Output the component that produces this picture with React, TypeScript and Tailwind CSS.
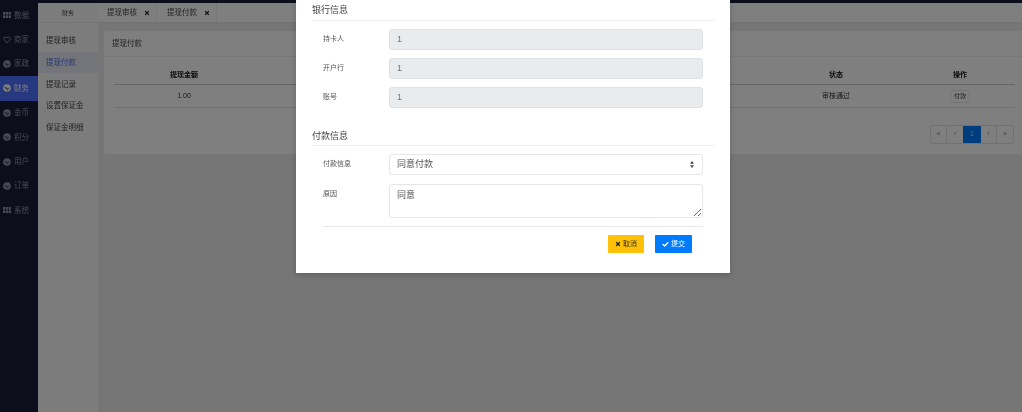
import { Check, X } from "lucide-react";

const NAV = [
  { label: "数据", icon: "grid" },
  { label: "商家", icon: "heart" },
  { label: "家政", icon: "globe" },
  { label: "财务", icon: "globe", active: true },
  { label: "金币", icon: "globe" },
  { label: "积分", icon: "globe" },
  { label: "用户", icon: "globe" },
  { label: "订单", icon: "globe" },
  { label: "系统", icon: "grid" },
];

const SUB_NAV = ["提现审核", "提现付款", "提现记录", "设置保证金", "保证金明细"];

function NavIcon({ type }: { type: string }) {
  if (type === "grid") {
    return (
      <svg width="8" height="6" viewBox="0 0 8 6" fill="currentColor" className="shrink-0">
        <rect x="0" y="0" width="2.3" height="2.6" />
        <rect x="2.85" y="0" width="2.3" height="2.6" />
        <rect x="5.7" y="0" width="2.3" height="2.6" />
        <rect x="0" y="3.4" width="2.3" height="2.6" />
        <rect x="2.85" y="3.4" width="2.3" height="2.6" />
        <rect x="5.7" y="3.4" width="2.3" height="2.6" />
      </svg>
    );
  }
  if (type === "heart") {
    return (
      <svg width="8" height="8" viewBox="0 0 8 8" fill="none" stroke="currentColor" strokeWidth="1" className="shrink-0">
        <path d="M4 6.6 C1.8 5 .8 4 .8 2.7 C.8 1.6 1.6 1 2.4 1 C3.1 1 3.7 1.4 4 2 C4.3 1.4 4.9 1 5.6 1 C6.4 1 7.2 1.6 7.2 2.7 C7.2 4 6.2 5 4 6.6 Z" />
      </svg>
    );
  }
  return (
    <svg width="8" height="8" viewBox="0 0 8 8" className="shrink-0">
      <circle cx="4" cy="4" r="3.8" fill="currentColor" />
      <path d="M1.2 3.4 L3.2 2.6 L4 4.2 L6.8 3.4 L4.4 6.8 L3 5 Z" fill="#1a1c36" opacity="0.55" />
    </svg>
  );
}

function Field({ label, value }: { label: string; value: string }) {
  return (
    <div className="flex h-[21px] items-start">
      <div className="w-[77px] shrink-0 pl-[11px] pt-[3px] text-[7px] leading-[14px] whitespace-nowrap text-[#555]">{label}</div>
      <div className="flex h-[21px] w-[314px] items-center rounded-[3px] border border-[#dee2e6] bg-[#e9ecef] pl-[7px] text-[9px] text-[#6c757d]">
        {value}
      </div>
    </div>
  );
}

export default function App() {
  return (
    <div className="relative flex h-[412px] w-[1022px] flex-col overflow-hidden bg-[#ededed] blur-[0.4px] font-['Liberation_Sans','Noto_Sans_CJK_SC',sans-serif]">
      <div className="h-[3px] shrink-0 bg-[#1a1c36]" />
      <div className="flex min-h-0 flex-1">
        <aside className="w-[38px] shrink-0 bg-[#1a1c36] text-[7.5px] text-[#9296ae]">
          {NAV.map((item) => (
            <div
              key={item.label}
              className={`flex h-[24.4px] items-center gap-[3px] pl-[3px] whitespace-nowrap ${
                item.active ? "bg-[#4c70ff] text-white" : ""
              }`}
            >
              <NavIcon type={item.icon} />
              <span>{item.label}</span>
            </div>
          ))}
        </aside>
        <div className="w-[60px] shrink-0 bg-[#f9f9fb] text-[7.5px] text-[#444]">
          <div className="flex h-[20px] items-center justify-center border-b border-[#e9e9e9] pt-[1px] text-[6px]">财务</div>
          <div className="pt-[7px]">
            {SUB_NAV.map((s, i) => (
              <div
                key={s}
                className={`flex h-[21.7px] items-center pl-[8px] whitespace-nowrap ${
                  i === 1 ? "bg-[#e8ebf6] text-[#4f6fe0]" : ""
                }`}
              >
                {s}
              </div>
            ))}
          </div>
        </div>
        <main className="min-w-0 flex-1">
          <div className="flex h-[20px] items-center border-b border-[#e5e5e5] bg-white text-[7.5px] text-[#444]">
            <div className="flex h-full w-[59px] items-center gap-[7px] border-r border-[#eeeeee] pl-[9px] whitespace-nowrap">
              提现审核 <X size={6} strokeWidth={5} className="text-[#333]" />
            </div>
            <div className="flex h-full w-[60px] items-center gap-[7px] border-r border-[#eeeeee] pl-[10px] whitespace-nowrap">
              提现付款 <X size={6} strokeWidth={5} className="text-[#333]" />
            </div>
          </div>
          <div className="ml-[6px] mt-[8px] h-[123px] rounded-l-[4px] bg-white text-[7px]">
            <div className="flex h-[26px] items-center border-b border-[#eeeeee] pl-[8px] pt-[1px] text-[7.5px] text-[#444]">提现付款</div>
            <div className="ml-[10px] mr-[7px]">
              <div className="flex h-[28px] items-end border-b border-[#cccccc] pb-[4px] font-bold text-[#111]">
                <span className="w-[140px] text-center">提现金额</span>
                <span className="ml-[527px] w-[110px] text-center">状态</span>
                <span className="ml-[14px] w-[110px] text-center">操作</span>
              </div>
              <div className="flex h-[23px] items-center border-b border-[#e3e3e3] text-[#333]">
                <span className="w-[140px] text-center">1.00</span>
                <span className="ml-[527px] w-[110px] text-center whitespace-nowrap">审核通过</span>
                <span className="ml-[14px] flex w-[110px] justify-center">
                  <span className="flex h-[13px] w-[20px] items-center justify-center rounded-[2px] border border-[#e9e9e9] text-[6px]">付款</span>
                </span>
              </div>
            </div>
            <div className="mr-[8px] mt-[17px] flex justify-end">
              <div className="flex h-[19px] overflow-hidden rounded-[2px] border border-[#dee2e6] text-[7px] text-[#888]">
                <span className="flex w-[16px] items-center justify-center border-r border-[#dee2e6]">«</span>
                <span className="flex w-[16px] items-center justify-center">‹</span>
                <span className="flex w-[18px] items-center justify-center bg-[#007bff] text-[#ccc]">1</span>
                <span className="flex w-[16px] items-center justify-center border-r border-[#dee2e6]">›</span>
                <span className="flex w-[16px] items-center justify-center">»</span>
              </div>
            </div>
          </div>
        </main>
      </div>

      <div className="absolute inset-0 bg-black/50" />

      <div className="absolute left-[296px] top-0 h-[273px] w-[434px] bg-white px-[16px] shadow-[0_2px_6px_rgba(0,0,0,0.2)]">
        <h3 className="flex h-[21px] items-center border-b border-[#eeeeee] pt-[1px] text-[9px] font-normal text-[#444]">银行信息</h3>
        <div className="mt-[8px] flex flex-col gap-[8px]">
          <Field label="持卡人" value="1" />
          <Field label="开户行" value="1" />
          <Field label="账号" value="1" />
        </div>
        <h3 className="mt-[19px] flex h-[19px] items-center border-b border-[#eeeeee] pt-[1px] text-[9px] font-normal text-[#444]">付款信息</h3>
        <div className="mt-[8px] flex h-[21px] items-start">
          <div className="w-[77px] shrink-0 pl-[11px] pt-[3px] text-[7px] leading-[14px] whitespace-nowrap text-[#555]">付款信息</div>
          <div className="flex h-[21px] w-[314px] items-center justify-between rounded-[3px] border border-[#e5e7eb] bg-white pl-[7px] pr-[8px] text-[9px] text-[#555]">
            同意付款
            <svg width="4" height="7" viewBox="0 0 4 7" fill="#444">
              <path d="M2 0 L4 2.8 H0 Z M2 7 L0 4.2 H4 Z" />
            </svg>
          </div>
        </div>
        <div className="mt-[9px] flex items-start">
          <div className="w-[77px] shrink-0 pl-[11px] pt-[3px] text-[7px] leading-[14px] whitespace-nowrap text-[#555]">原因</div>
          <textarea
            readOnly
            value="同意"
            className="h-[34px] w-[314px] rounded-[3px] border border-[#e5e7eb] px-[7px] py-[3px] text-[9px] leading-[14px] text-[#555]"
          />
        </div>
        <div className="mx-[11px] mt-[8px] flex justify-end gap-[11px] border-t border-[#e9e9e9] pr-[11px] pt-[8px]">
          <button className="flex h-[18px] w-[36px] items-center justify-center gap-[2px] rounded-[1px] bg-[#ffc107] text-[7px] text-[#333]">
            <X size={6} strokeWidth={5} className="text-[#222]" />
            取消
          </button>
          <button className="flex h-[18px] w-[37px] items-center justify-center gap-[2px] rounded-[1px] bg-[#007bff] text-[7px] text-white">
            <Check size={7} strokeWidth={5} />
            提交
          </button>
        </div>
      </div>
    </div>
  );
}
